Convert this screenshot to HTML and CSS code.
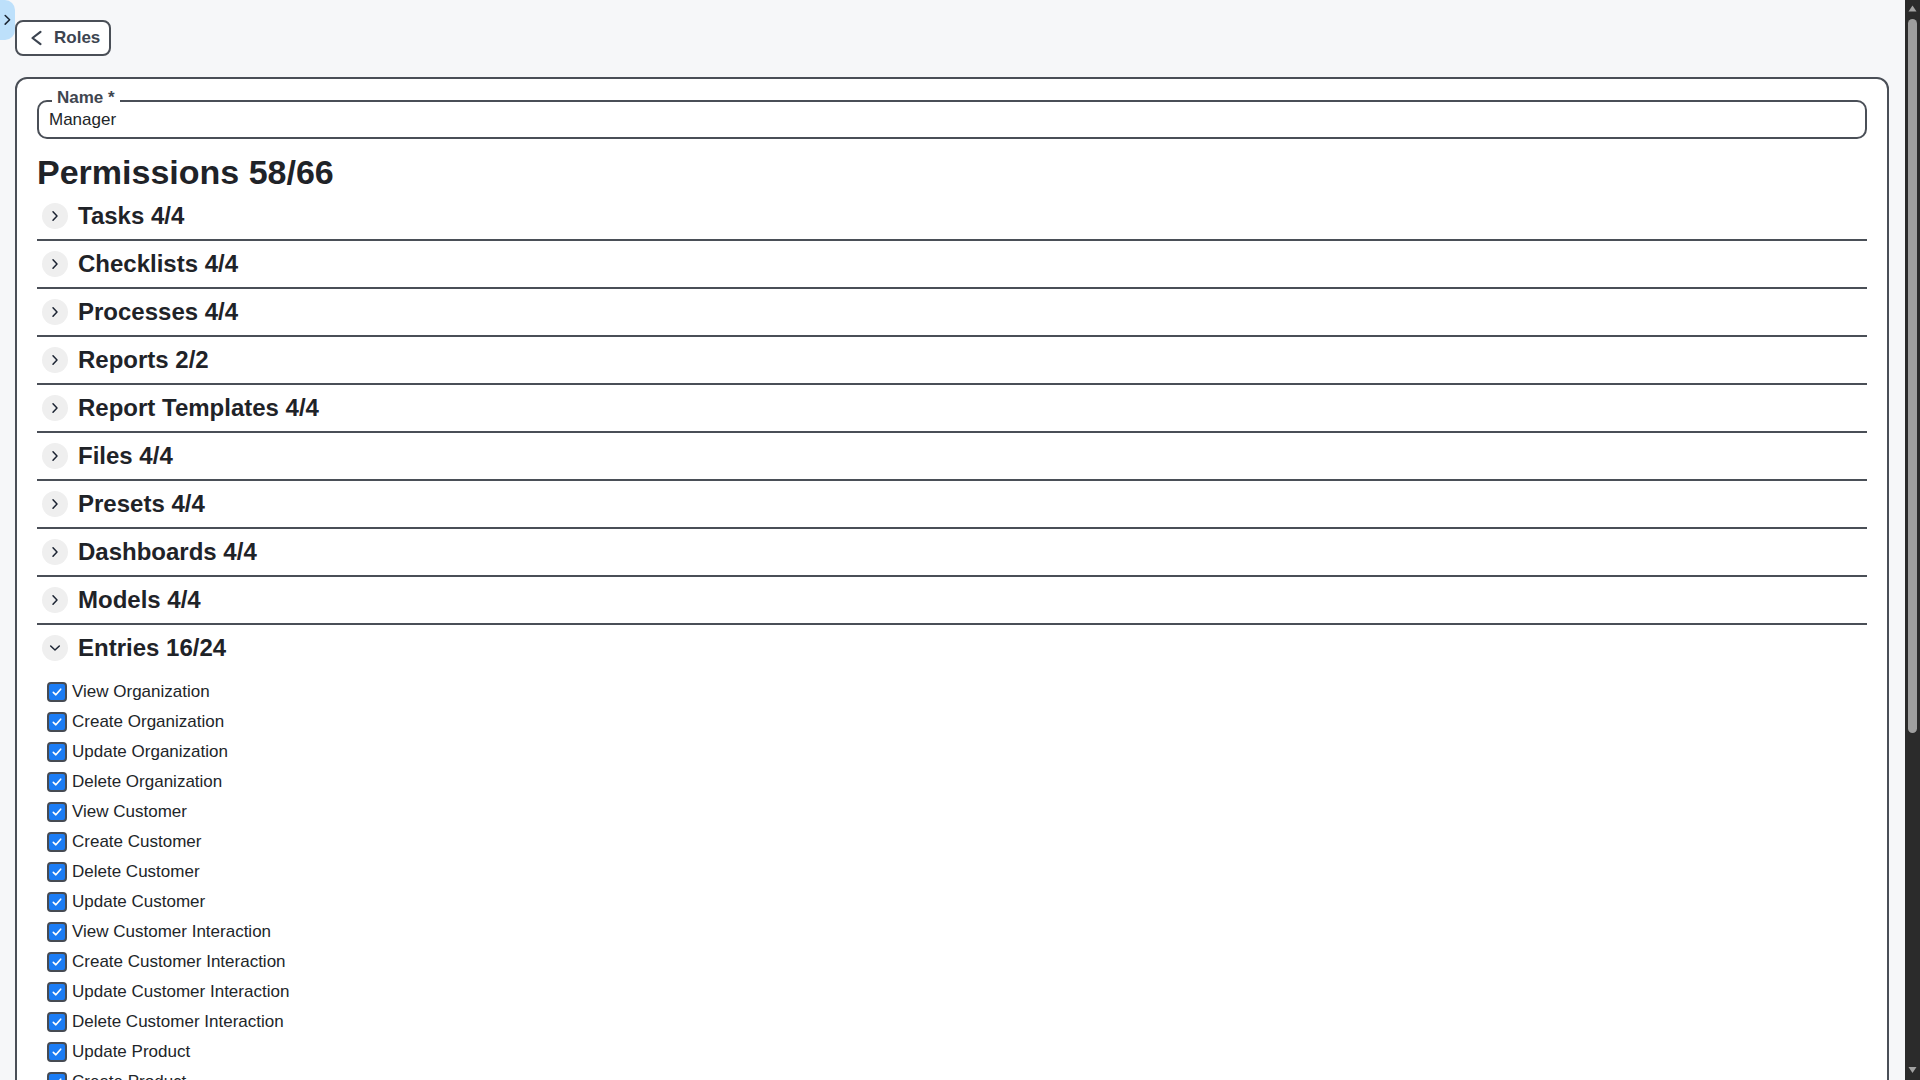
FILE: index.html
```html
<!DOCTYPE html>
<html lang="en">
<head>
<meta charset="utf-8">
<title>Role - Manager</title>
<link rel="stylesheet" href="styles.css">
</head>
<body>
<main class="page">
  <button class="back-btn">
    <svg width="14" height="20" viewBox="0 0 14 20"><path d="M11.5 3.8 L3.5 10 L11.5 16.2" fill="none" stroke="#3c4450" stroke-width="2.2" stroke-linecap="round" stroke-linejoin="round"/></svg>
    <span>Roles</span>
  </button>
  <section class="card">
    <div class="field">
      <label class="field-label" for="name">Name *</label>
      <input id="name" class="field-input" type="text" value="Manager">
    </div>
    <h1 class="perm-title">Permissions 58/66</h1>
    <div class="groups">
      <div class="group"><span class="exp"><svg width="26" height="26" viewBox="0 0 26 26"><path d="M11 8.7 L15 13 L11 17.3" class="chev"/></svg></span><span class="group-title">Tasks 4/4</span></div>
      <div class="group"><span class="exp"><svg width="26" height="26" viewBox="0 0 26 26"><path d="M11 8.7 L15 13 L11 17.3" class="chev"/></svg></span><span class="group-title">Checklists 4/4</span></div>
      <div class="group"><span class="exp"><svg width="26" height="26" viewBox="0 0 26 26"><path d="M11 8.7 L15 13 L11 17.3" class="chev"/></svg></span><span class="group-title">Processes 4/4</span></div>
      <div class="group"><span class="exp"><svg width="26" height="26" viewBox="0 0 26 26"><path d="M11 8.7 L15 13 L11 17.3" class="chev"/></svg></span><span class="group-title">Reports 2/2</span></div>
      <div class="group"><span class="exp"><svg width="26" height="26" viewBox="0 0 26 26"><path d="M11 8.7 L15 13 L11 17.3" class="chev"/></svg></span><span class="group-title">Report Templates 4/4</span></div>
      <div class="group"><span class="exp"><svg width="26" height="26" viewBox="0 0 26 26"><path d="M11 8.7 L15 13 L11 17.3" class="chev"/></svg></span><span class="group-title">Files 4/4</span></div>
      <div class="group"><span class="exp"><svg width="26" height="26" viewBox="0 0 26 26"><path d="M11 8.7 L15 13 L11 17.3" class="chev"/></svg></span><span class="group-title">Presets 4/4</span></div>
      <div class="group"><span class="exp"><svg width="26" height="26" viewBox="0 0 26 26"><path d="M11 8.7 L15 13 L11 17.3" class="chev"/></svg></span><span class="group-title">Dashboards 4/4</span></div>
      <div class="group"><span class="exp"><svg width="26" height="26" viewBox="0 0 26 26"><path d="M11 8.7 L15 13 L11 17.3" class="chev"/></svg></span><span class="group-title">Models 4/4</span></div>
      <div class="group group-open"><span class="exp"><svg width="26" height="26" viewBox="0 0 26 26"><path d="M8.7 11 L13 15 L17.3 11" class="chev"/></svg></span><span class="group-title">Entries 16/24</span></div>
      <ul class="perm-list">
        <li class="perm"><span class="box on"><svg width="16" height="16" viewBox="0 0 16 16"><path d="M4.3 8.3 L6.9 10.8 L11.7 5.2" class="tick"/></svg></span><span>View Organization</span></li>
        <li class="perm"><span class="box on"><svg width="16" height="16" viewBox="0 0 16 16"><path d="M4.3 8.3 L6.9 10.8 L11.7 5.2" class="tick"/></svg></span><span>Create Organization</span></li>
        <li class="perm"><span class="box on"><svg width="16" height="16" viewBox="0 0 16 16"><path d="M4.3 8.3 L6.9 10.8 L11.7 5.2" class="tick"/></svg></span><span>Update Organization</span></li>
        <li class="perm"><span class="box on"><svg width="16" height="16" viewBox="0 0 16 16"><path d="M4.3 8.3 L6.9 10.8 L11.7 5.2" class="tick"/></svg></span><span>Delete Organization</span></li>
        <li class="perm"><span class="box on"><svg width="16" height="16" viewBox="0 0 16 16"><path d="M4.3 8.3 L6.9 10.8 L11.7 5.2" class="tick"/></svg></span><span>View Customer</span></li>
        <li class="perm"><span class="box on"><svg width="16" height="16" viewBox="0 0 16 16"><path d="M4.3 8.3 L6.9 10.8 L11.7 5.2" class="tick"/></svg></span><span>Create Customer</span></li>
        <li class="perm"><span class="box on"><svg width="16" height="16" viewBox="0 0 16 16"><path d="M4.3 8.3 L6.9 10.8 L11.7 5.2" class="tick"/></svg></span><span>Delete Customer</span></li>
        <li class="perm"><span class="box on"><svg width="16" height="16" viewBox="0 0 16 16"><path d="M4.3 8.3 L6.9 10.8 L11.7 5.2" class="tick"/></svg></span><span>Update Customer</span></li>
        <li class="perm"><span class="box on"><svg width="16" height="16" viewBox="0 0 16 16"><path d="M4.3 8.3 L6.9 10.8 L11.7 5.2" class="tick"/></svg></span><span>View Customer Interaction</span></li>
        <li class="perm"><span class="box on"><svg width="16" height="16" viewBox="0 0 16 16"><path d="M4.3 8.3 L6.9 10.8 L11.7 5.2" class="tick"/></svg></span><span>Create Customer Interaction</span></li>
        <li class="perm"><span class="box on"><svg width="16" height="16" viewBox="0 0 16 16"><path d="M4.3 8.3 L6.9 10.8 L11.7 5.2" class="tick"/></svg></span><span>Update Customer Interaction</span></li>
        <li class="perm"><span class="box on"><svg width="16" height="16" viewBox="0 0 16 16"><path d="M4.3 8.3 L6.9 10.8 L11.7 5.2" class="tick"/></svg></span><span>Delete Customer Interaction</span></li>
        <li class="perm"><span class="box on"><svg width="16" height="16" viewBox="0 0 16 16"><path d="M4.3 8.3 L6.9 10.8 L11.7 5.2" class="tick"/></svg></span><span>Update Product</span></li>
        <li class="perm"><span class="box on"><svg width="16" height="16" viewBox="0 0 16 16"><path d="M4.3 8.3 L6.9 10.8 L11.7 5.2" class="tick"/></svg></span><span>Create Product</span></li>
        <li class="perm"><span class="box on"><svg width="16" height="16" viewBox="0 0 16 16"><path d="M4.3 8.3 L6.9 10.8 L11.7 5.2" class="tick"/></svg></span><span>View Product</span></li>
        <li class="perm"><span class="box on"><svg width="16" height="16" viewBox="0 0 16 16"><path d="M4.3 8.3 L6.9 10.8 L11.7 5.2" class="tick"/></svg></span><span>Delete Product</span></li>
        <li class="perm"><span class="box"></span><span>View Order</span></li>
        <li class="perm"><span class="box"></span><span>Create Order</span></li>
        <li class="perm"><span class="box"></span><span>Update Order</span></li>
        <li class="perm"><span class="box"></span><span>Delete Order</span></li>
        <li class="perm"><span class="box"></span><span>View Invoice</span></li>
        <li class="perm"><span class="box"></span><span>Create Invoice</span></li>
        <li class="perm"><span class="box"></span><span>Update Invoice</span></li>
        <li class="perm"><span class="box"></span><span>Delete Invoice</span></li>
      </ul>
    </div>
  </section>
</main>
<div class="scrollbar" aria-hidden="true">
  <svg class="sb-arrow" width="15" height="15" viewBox="0 0 15 15"><polygon points="3.5,11.5 11.5,11.5 7.5,5.5" fill="#a3a3a3"/></svg>
  <div class="sb-thumb"></div>
  <div class="sb-rest"></div>
  <svg class="sb-arrow" width="15" height="15" viewBox="0 0 15 15"><polygon points="3.5,2 11.5,2 7.5,8" fill="#a3a3a3"/></svg>
</div>
<div class="side-toggle">
  <svg width="15" height="40" viewBox="0 0 15 40"><path d="M5.2 15.5 L9.6 19.8 L5.2 24.1" fill="none" stroke="#1d2735" stroke-width="1.6" stroke-linecap="round" stroke-linejoin="round"/></svg>
</div>
</body>
</html>
```

FILE: styles.css
```css
html {
  height: 100%;
  background: #f6f7f9;
}

body {
  margin: 0;
  height: 100vh;
  overflow: hidden;
  display: flex;
  background: #f6f7f9;
  color: #212529;
  font-family: "Liberation Sans", Arial, sans-serif;
  font-size: 17px;
}

.side-toggle {
  position: absolute;
  top: 0;
  left: 0;
  width: 15px;
  height: 40px;
  background: #bde0fb;
  border-radius: 0 10px 10px 0;
}

.side-toggle svg {
  display: block;
}

.page {
  flex: 1;
  min-width: 0;
  box-sizing: border-box;
  height: 100vh;
  overflow: hidden;
  padding: 20px 16px 40px 15px;
}

.scrollbar {
  flex: none;
  width: 15px;
  height: 100vh;
  background: #2b2b2b;
  display: flex;
  flex-direction: column;
}

.sb-arrow {
  display: block;
  flex: none;
}

.sb-thumb {
  flex: none;
  width: 9px;
  height: 714px;
  margin: 4px 0 0 3px;
  border-radius: 5px;
  background: #9f9f9f;
}

.sb-rest {
  flex: 1;
}

.back-btn {
  display: flex;
  align-items: center;
  gap: 11px;
  height: 36px;
  padding: 0 9px 0 12px;
  border: 2px solid #4a4f57;
  border-radius: 8px;
  background: #ffffff;
  color: #3c4450;
  font-family: "Liberation Sans", Arial, sans-serif;
  font-size: 17px;
  font-weight: 700;
  cursor: pointer;
}

.back-btn svg {
  display: block;
}

.card {
  margin-top: 21px;
  border: 2px solid #4a4f57;
  border-radius: 12px;
  background: #ffffff;
  padding: 21px 20px 20px 20px;
}

.field {
  position: relative;
}

.field-label {
  position: absolute;
  top: -12px;
  left: 15px;
  padding: 0 5px;
  background: #ffffff;
  color: #3f4650;
  font-size: 17px;
  line-height: 20px;
  font-weight: 700;
}

.field-input {
  display: block;
  box-sizing: border-box;
  width: 100%;
  height: 39px;
  padding: 0 10px;
  border: 2px solid #4a4f57;
  border-radius: 10px;
  background: #ffffff;
  color: #212529;
  font-family: "Liberation Sans", Arial, sans-serif;
  font-size: 17px;
  outline: none;
}

.perm-title {
  margin: 13px 0 0 0;
  font-size: 34px;
  line-height: 1.2;
  font-weight: 700;
  color: #1f2328;
}

.group {
  display: flex;
  align-items: center;
  gap: 10px;
  height: 46px;
  border-bottom: 2px solid #4a4f57;
  padding-left: 5px;
}

.group-open {
  border-bottom: none;
}

.exp {
  width: 26px;
  height: 26px;
  border-radius: 50%;
  background: #efefef;
  flex: none;
}

.exp svg {
  display: block;
}

.chev {
  fill: none;
  stroke: #1c2433;
  stroke-width: 1.5;
  stroke-linecap: round;
  stroke-linejoin: round;
}

.group-title {
  font-size: 24px;
  font-weight: 700;
  color: #1f2328;
}

.perm-list {
  list-style: none;
  margin: 0;
  padding: 6px 0 0 10px;
}

.perm {
  display: flex;
  align-items: center;
  gap: 5px;
  height: 30px;
  font-size: 17px;
  color: #212529;
}

.box {
  box-sizing: border-box;
  width: 20px;
  height: 20px;
  border: 2px solid #464b53;
  border-radius: 4px;
  background: #ffffff;
  flex: none;
}

.box.on {
  background: #1b7cf4;
}

.box svg {
  display: block;
}

.tick {
  fill: none;
  stroke: #ffffff;
  stroke-width: 1.6;
  stroke-linecap: round;
  stroke-linejoin: round;
}
```
